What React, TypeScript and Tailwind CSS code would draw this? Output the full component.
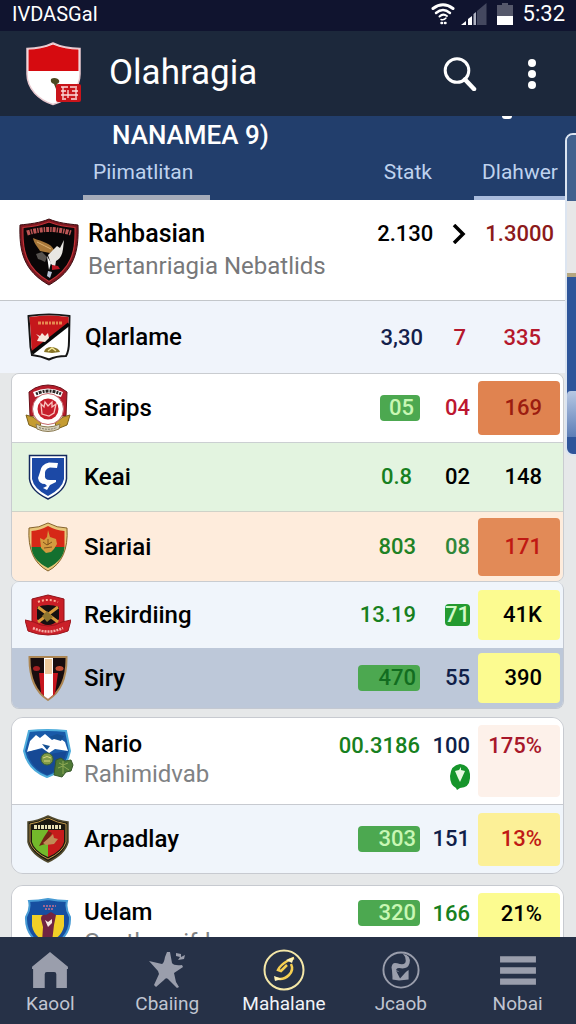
import type { ReactNode } from "react";

type IconProps = { className?: string };

function AppShield() {
  return (
    <svg viewBox="0 0 58 64" className="h-16 w-[58px]" aria-hidden="true">
      <path d="M28 1C20 5 10 6.500 2 6.500V32C2 47 14 58 28 62.500C43 58 55 47 55 32V6.500C46 6.500 36 5 28 1Z" fill="#fff" stroke="#e8c9cf" strokeWidth="1.500" />
      <path d="M28 2.500C20 6 11 7.500 3.500 7.500V29H53.500V7.500C45 7.500 36 6 28 2.500Z" fill="#d60b10" />
      <path d="M26 37q3-2 7 0q3 3-1 5l-1 5l-2-5q-4-1-3-5z" fill="#4c4a22" />
      <rect x="31" y="42" width="25" height="18" rx="2" fill="#c9151b" />
      <path d="M36 45h7M45 45h7M36 49h5M43 48v8M47 49h6M36 53h17M37 57h4M46 57h6M38 45v11M51 46v10" stroke="#fbdcdc" strokeWidth="1.300" />
    </svg>
  );
}

function WifiIcon() {
  return (
    <svg viewBox="0 0 24 22" className="h-[22px] w-6" fill="none" stroke="#fff" strokeLinecap="round" aria-hidden="true">
      <path d="M2 5.500Q12-2 22 5.500" strokeWidth="3" />
      <path d="M5 10Q12 4 19 10" strokeWidth="2.500" />
      <path d="M8.500 13.500Q12 10 16 13" strokeWidth="2" />
      <path d="M10 16.500Q13 17.500 15 15" strokeWidth="1.500" />
      <path d="M10.500 20h.5M14 20h.5" strokeWidth="2.500" />
    </svg>
  );
}

function SignalIcon() {
  return (
    <svg viewBox="0 0 26 22" className="h-[22px] w-[26px]" aria-hidden="true">
      <path d="M0 22L5 18V22Z" fill="#fff" />
      <path d="M7 16L11 13V22H7Z" fill="#fff" />
      <path d="M12.500 11L15 9V22H12.500Z" fill="#aeb1c0" />
      <path d="M16 8L25.500 0V22H16Z" fill="#44485f" />
    </svg>
  );
}

function BatteryIcon() {
  return (
    <svg viewBox="0 0 16 22" className="h-[22px] w-4" aria-hidden="true">
      <path d="M5 0H11V2H16V22H0V2H5Z" fill="#55586b" />
      <path d="M0 13H16V22H0Z" fill="#fff" />
    </svg>
  );
}

function SearchIcon() {
  return (
    <svg viewBox="0 0 34 34" className="size-[34px]" fill="none" stroke="#fff" aria-hidden="true">
      <circle cx="14" cy="13.500" r="11.800" strokeWidth="3" />
      <path d="M22 22.500L31 32" strokeWidth="4.500" strokeLinecap="round" />
    </svg>
  );
}

function MoreIcon() {
  return (
    <svg viewBox="0 0 10 32" className="h-8 w-2.5" fill="#fff" aria-hidden="true">
      <circle cx="5" cy="5" r="4" />
      <circle cx="5" cy="16" r="4" />
      <circle cx="5" cy="27" r="4" />
    </svg>
  );
}

function EagleCrest() {
  return (
    <svg viewBox="0 0 62 68" className="h-[68px] w-[62px]" aria-hidden="true">
      <path d="M31 1C22 5 11 6 2 7C1 34 6 53 31 67C56 53 61 34 60 7C51 6 40 5 31 1Z" fill="#7d1820" stroke="#3a0c10" strokeWidth="1" />
      <path d="M31 4C23 7 13 9 5 9.500C4 34 9 51 31 63.500C53 51 58 34 57 9.500C49 9 39 7 31 4Z" fill="#090607" stroke="#c03136" strokeWidth="1.200" />
      <path d="M9 15Q31 8 53 15" fill="none" stroke="#bd5655" strokeWidth="5" strokeDasharray="3 1 1.500 1" />
      <path d="M15 20C25 24 33 25 36 32L32 35L22 33C20 29 16 26 15 20Z" fill="#a9783a" />
      <path d="M19 24Q27 28 33 31" stroke="#e0b374" fill="none" />
      <path d="M35 32L39 28L42 30L46 22L45 31Q44 40 38 43L37 49L33 46L30 37Z" fill="#e9e6e2" />
      <path d="M18 36L24 34L29 39L27 44L23 42L20 41Z" fill="#56524f" />
      <path d="M29 38L33 45L31 52Z" fill="#fff" />
      <path d="M34 47l6 1l2 3l-8 1z" fill="#bb1521" />
      <path d="M30 53l4 1l-2 6l-3-2z" fill="#b9c4d6" />
    </svg>
  );
}

function DiagonalCrest() {
  return (
    <svg viewBox="0 0 44 48" className="h-12 w-11" aria-hidden="true">
      <path d="M1.500 3Q22 0 42.500 3L42 28Q42 38 39 43Q29 43 22 46.500Q14 43 5 42Q3 34 3 26Z" fill="#fff" stroke="#151515" strokeWidth="2" />
      <path d="M2.500 4Q22 1 41.500 4V11L5 39Q4 32 4 24Z" fill="#c5171b" />
      <path d="M42 11L5 40" stroke="#080808" strokeWidth="3.500" />
      <path d="M11 10H35" stroke="#e68a51" strokeWidth="3" strokeDasharray="3 1 2 1" />
      <path d="M9 21l4 2l2-3l3 3l3-3l1 5l-4 4l-8-1l2-4z" fill="#f8e7dc" />
      <path d="M17 39q1-5 8-5q7 1 8 5l-8 1z" fill="#867324" />
      <path d="M21 38l4-3l4 3" stroke="#f5e89a" fill="none" strokeWidth="1.500" />
    </svg>
  );
}

function RoundCrest() {
  return (
    <svg viewBox="0 0 46 48" className="h-12 w-[46px]" aria-hidden="true">
      <path d="M4 8L10 4Q23-2 36 4L42 8L41 32H5Z" fill="#b51c2a" stroke="#6a1019" />
      <path d="M8 8Q23 1 38 8L36 13Q23 8 10 13Z" fill="#fff" />
      <path d="M11 10Q23 4 36 10" fill="none" stroke="#2c2525" strokeWidth="3" strokeDasharray="2 1 3 1" />
      <path d="M1 31L8 33L16 39L14 45L4 41Z M45 31L38 33L30 39L32 45L42 41Z" fill="#c59c31" stroke="#7b611d" />
      <circle cx="23" cy="25" r="15.500" fill="#fff" stroke="#c56a6e" />
      <circle cx="23" cy="25" r="10.500" fill="#c71e2b" />
      <path d="M16 20l3 3l1-5l3 4l4-4v5l4-3l-2 9l-5 3l-7-2z" fill="none" stroke="#f8c4be" strokeWidth="1.300" />
      <path d="M11 40Q23 46 35 40L34 45Q23 50 12 45Z" fill="#d8d2bc" stroke="#8a7a52" />
      <path d="M14 43.500Q23 47 32 43.500" fill="none" stroke="#7c7564" strokeDasharray="2 1" />
    </svg>
  );
}

function BlueCrest() {
  return (
    <svg viewBox="0 0 40 46" className="h-[46px] w-10" aria-hidden="true">
      <path d="M1.500 1.500H38.500V25Q37 37 20 45Q3 37 1.500 25Z" fill="#fff" stroke="#14295f" strokeWidth="1.500" />
      <path d="M4 4H36V25Q34 35 20 42Q6 35 4 25Z" fill="#1c49a6" />
      <path d="M30 9L21 8.500Q13 10 12 18L10 24Q11 30 17 30L19 32L15 34L19 36L22 31L28 28V26L22 26Q16 26 17 21Q16 15 22 13.500L29 14Z" fill="#fff" />
    </svg>
  );
}

function RedGreenCrest() {
  return (
    <svg viewBox="0 0 42 50" className="h-[50px] w-[42px]" aria-hidden="true">
      <path d="M21 1Q12 6 2 6Q0 38 21 49Q42 38 40 6Q30 6 21 1Z" fill="#e7c77b" stroke="#84622a" />
      <path d="M21 4Q13 8.500 4.500 9V25H37.500V9Q29 8.500 21 4Z" fill="#d62817" />
      <path d="M4.500 25H37.500Q37 38 21 46Q5 38 4.500 25Z" fill="#14702f" />
      <path d="M13 16l4 2l3-3l1-7l2 7l6 2l1 5l-3 5l-3 3l-5 1l-5-5z" fill="#d39b3f" />
      <path d="M16 20l4 3l5-3M17 26l8-1M21 17v6" stroke="#80521c" fill="none" />
    </svg>
  );
}

function RibbonCrest() {
  return (
    <svg viewBox="0 0 46 42" className="h-[42px] w-[46px]" aria-hidden="true">
      <path d="M7 5L23 1L39 5V30L23 36L7 30Z" fill="#c91e26" stroke="#8f1118" />
      <path d="M12 13Q23 9 34 13V25Q29 31 23 31Q17 31 12 25Z" fill="#151011" />
      <path d="M13 13L33 28M33 13L13 28" stroke="#d79a3b" strokeWidth="3" />
      <path d="M17 22l5-5l6 6l-6 5z" fill="#8f7530" />
      <path d="M13 8Q23 4 33 8" stroke="#ffb19b" fill="none" strokeWidth="2" strokeDasharray="2 2" />
      <path d="M0 26L9 28Q23 36 37 28L46 26L43 37Q23 45 3 37Z" fill="#cb2029" stroke="#9c151c" />
      <path d="M8 34Q23 41 38 34" stroke="#f5aea7" fill="none" strokeWidth="2.500" strokeDasharray="2 1" />
    </svg>
  );
}

function StripeCrest() {
  return (
    <svg viewBox="0 0 40 46" className="h-[46px] w-10" aria-hidden="true">
      <path d="M1.500 2H38.500Q39 33 20 45Q1 33 1.500 2Z" fill="#180d0e" stroke="#ad8754" strokeWidth="2" />
      <path d="M11 18H30L27 39L20 44L13 38Z" fill="#c6151d" />
      <path d="M16 3H25V40L20 44L16 41Z" fill="#fff" />
      <path d="M17 4H24V19H17Z" fill="#edc99c" />
      <ellipse cx="8.500" cy="13.500" rx="3.500" ry="2.500" fill="#a31f22" />
      <ellipse cx="31.500" cy="13.500" rx="4" ry="2.500" fill="#c14b31" />
    </svg>
  );
}

function SkyCrest() {
  return (
    <svg viewBox="0 0 52 50" className="h-[50px] w-[52px]" aria-hidden="true">
      <path d="M7 2Q25 0 44 2L48 22Q44 42 25 48Q6 41 2 22Z" fill="#195aa8" stroke="#4faddc" strokeWidth="2" />
      <path d="M8 12L14 6L18 9L23 5L30 11L36 8L43 13L46 22L33 20L27 24L20 19L5 23Z" fill="#fff" />
      <path d="M27 8l8-3l7 2l-3 5l-7-2zM20 15l8 2l-3 4z" fill="#155094" />
      <path d="M5 23L20 20L28 25L45 22Q41 40 25 46Q9 39 5 23Z" fill="#164995" />
      <circle cx="25" cy="30" r="6" fill="#829c49" stroke="#3d6333" />
      <path d="M21 29q4-3 8 0M22 32h6" stroke="#d6d67f" fill="none" />
      <path d="M34 31l5-2l4 3l6-1l2 5l-2 6l-5 1l-4 5l-8-2l1-8z" fill="#4f7936" stroke="#37582b" />
      <path d="M37 34l4 2l5-2M36 39l5-2l6 4M41 32v13" stroke="#90aa55" fill="none" />
    </svg>
  );
}

function ClawCrest() {
  return (
    <svg viewBox="0 0 44 48" className="h-12 w-11" aria-hidden="true">
      <path d="M22 1Q12 6 2 7V27Q5 39 22 47Q39 39 42 27V7Q32 6 22 1Z" fill="#1b180f" stroke="#514a2e" strokeWidth="1.500" />
      <path d="M22 3Q12 8 4 9V27Q7 37 22 44Q37 37 40 27V9Q32 8 22 3Z" fill="none" stroke="#c29a4a" />
      <path d="M6 15H22V42Q8 36 6 27Z" fill="#73b92b" />
      <path d="M22 15H38V27Q36 36 22 42Z" fill="#c61b1b" />
      <path d="M8 12H36" stroke="#e7dfb2" strokeWidth="4" strokeDasharray="3 1 2 1" />
      <path d="M13 31L18 22L22 16L26 18L23 23L19 29Z" fill="#722415" />
      <path d="M17 28L24 22L27 19L28 23L32 24L28 29L20 30Z" fill="#c08c56" />
    </svg>
  );
}

function FistCrest() {
  return (
    <svg viewBox="0 0 48 52" className="h-[52px] w-12" aria-hidden="true">
      <path d="M5 4Q14 4 24 2Q34 4 43 4Q41 12 46 20Q47 41 24 51Q1 41 2 20Q7 12 5 4Z" fill="#174fa0" stroke="#489bd4" strokeWidth="2" />
      <path d="M8 18H40V29Q38 40 24 46Q10 40 8 29Z" fill="#f1cf27" />
      <path d="M17 22Q17 17 22 18L27 15L32 18L30 28L28 45H18L19 30Z" fill="#702443" />
      <path d="M21 23l3 2l4-3v4l-4 4z" fill="#f6e8e1" />
      <path d="M19 9h13M21 12h9" stroke="#9d6691" strokeWidth="2" strokeDasharray="2 1" />
    </svg>
  );
}

function LeafBadge() {
  return (
    <svg viewBox="0 0 20 27" className="h-[27px] w-5" role="img" aria-label="Naik">
      <path d="M10 0Q19 1 20 10Q21 24 10 24L7 26L6 24Q0 21 0 12Q1 1 10 0Z" fill="#16952b" />
      <path d="M5 7L9 6L11 3V6L15 7L10 18L8 14Z" fill="#e9f9e2" />
    </svg>
  );
}

function HomeIcon({ className }: IconProps) {
  return (
    <svg viewBox="0 0 36 36" className={className} fill="currentColor" aria-hidden="true">
      <path d="M18 1L35 15V17H34V35H24V22Q24 20 22 20H15Q13 20 13 22V35H2V17H1V15Z" />
    </svg>
  );
}

function StarIcon({ className }: IconProps) {
  return (
    <svg viewBox="0 0 38 38" className={className} fill="currentColor" aria-hidden="true">
      <path d="M1 10L14 13Q16 12 17 6L19 1H22L24 12Q26 15 34 14L35 16L26 22L28 31L31 36L29 37L20 28Q18 26 16 29L8 36L6 34L11 23L10 20Z" />
      <path d="M28 2L33 3V6L37 4L36 8L30 9L32 6L28 5Z" />
    </svg>
  );
}

function SwirlIcon({ className }: IconProps) {
  return (
    <svg viewBox="0 0 42 42" className={className} fill="none" aria-hidden="true">
      <circle cx="21" cy="21" r="19.500" stroke="#f4e7a8" strokeWidth="2" />
      <path d="M31 9L26 11Q17 16 15 21L18 22L24 16" stroke="#f6cf52" strokeWidth="2.500" />
      <path d="M28 15Q31 21 26 26Q20 32 12 29" stroke="#f6cf52" strokeWidth="2.500" />
      <path d="M31 8L23 11L29 14ZM11 27L12 32L19 30Z" fill="#fff3b8" />
    </svg>
  );
}

function BirdIcon({ className }: IconProps) {
  return (
    <svg viewBox="0 0 40 40" className={className} aria-hidden="true">
      <circle cx="20" cy="20" r="18.500" fill="none" stroke="currentColor" strokeWidth="2" />
      <path d="M22 3Q31 5 29 13Q27 20 18 18Q14 18 15 22L12 30L10 17Q11 11 16 13Q25 16 25 10Q25 6 22 3Z" fill="currentColor" />
      <path d="M11 19L17 21L20 25L28 20V30L18 31L11 30Z" fill="currentColor" />
      <path d="M15 21L20 23L27 20L19 29Z" fill="#263147" />
    </svg>
  );
}

function MenuIcon({ className }: IconProps) {
  return (
    <svg viewBox="0 0 36 36" className={className} fill="currentColor" aria-hidden="true">
      <path d="M1 5H35V11H1ZM1 15.500H35V21.500H1ZM1 26H35V32H1Z" />
    </svg>
  );
}

type Row = {
  name: string;
  sub?: string;
  crest: ReactNode;
  row: string;
  first: ReactNode;
  second: ReactNode;
  last: ReactNode;
  lastBox: string;
};

function Pill({ children, className }: { children: ReactNode; className: string }) {
  return <span className={`flex h-[26px] items-center justify-end rounded bg-[#4ca850] ${className}`}>{children}</span>;
}

const cardGroups: { className: string; rows: Row[] }[] = [
  {
    className: "rounded-lg border border-[#c9ccd0]",
    rows: [
      {
        name: "Sarips", crest: <RoundCrest />, row: "h-[69px] bg-white border-b border-[#cbcfd2] items-center",
        first: <Pill className="w-10 px-1.5 text-[#c8f7b4]">05</Pill>,
        second: <span className="text-[#bd1730]">04</span>, last: "169",
        lastBox: "h-[54px] bg-[#e08350] text-[#9c1d10]",
      },
      {
        name: "Keai", crest: <BlueCrest />, row: "h-[69px] bg-[#e3f4e0] border-b border-[#cfd2c8] items-center",
        first: <span className="pr-2 text-[#178020]">0.8</span>, second: "02", last: "148", lastBox: "h-[54px]",
      },
      {
        name: "Siariai", crest: <RedGreenCrest />, row: "h-[69px] bg-[#feecdc] items-center",
        first: <span className="pr-1 text-[#218224]">803</span>, second: <span className="text-[#318739]">08</span>, last: "171",
        lastBox: "h-[58px] bg-[#e28a57] text-[#c01913]",
      },
    ],
  },
  {
    className: "rounded-lg border-x border-b border-[#c3c8d1]",
    rows: [
      {
        name: "Rekirdiing", crest: <RibbonCrest />, row: "h-[66px] bg-[#f0f5fb] items-center",
        first: <span className="pr-1 text-[#178020]">13.19</span>,
        second: <span className="flex h-[22px] items-center rounded-sm bg-[#249a30] text-[#d2f9c9]">71</span>,
        last: "41K", lastBox: "h-[50px] bg-[#fcfb90]",
      },
      {
        name: "Siry", crest: <StripeCrest />, row: "h-[60px] bg-[#bdc8d9] items-center",
        first: <Pill className="w-[62px] px-1 text-[#126d20]">470</Pill>,
        second: <span className="text-[#101f49]">55</span>, last: "390", lastBox: "h-[50px] bg-[#fcfb90]",
      },
    ],
  },
  {
    className: "mt-2 rounded-xl border border-[#c7cad0]",
    rows: [
      {
        name: "Nario", sub: "Rahimidvab", crest: <SkyCrest />, row: "h-[87px] bg-white border-b border-[#c7cad0] items-start pt-[7px]",
        first: <span className="text-[#178020]">00.3186</span>,
        second: <span className="flex flex-col items-end gap-1 text-[#101f49]">100<LeafBadge /></span>,
        last: "175%", lastBox: "h-[72px] items-start bg-[#fdf1ea] pt-[7px] text-[#a8172a]",
      },
      {
        name: "Arpadlay", crest: <ClawCrest />, row: "h-[68px] bg-[#f0f5fb] items-center",
        first: <Pill className="w-[62px] px-1 text-[#c8f7b4]">303</Pill>,
        second: <span className="text-[#101f49]">151</span>, last: "13%",
        lastBox: "h-[53px] bg-[#fcf097] text-[#c01a15]",
      },
    ],
  },
  {
    className: "mt-[11px] rounded-xl border border-[#c7cad0]",
    rows: [
      {
        name: "Uelam", sub: "Gentleswifdy", crest: <FistCrest />, row: "h-[87px] bg-white items-start pt-[7px]",
        first: <Pill className="w-[62px] px-1 text-[#c8f7b4]">320</Pill>,
        second: <span className="text-[#178020]">166</span>, last: "21%",
        lastBox: "h-[72px] items-start bg-[#fcfb90] pt-[7px]",
      },
    ],
  },
];

function TeamRow({ name, sub, crest, row, first, second, last, lastBox }: Row) {
  const top = sub ? "pt-[7px] leading-7" : "leading-7";
  return (
    <tr className={`flex pr-[3px] ${row}`}>
      <td className={`flex w-[72px] shrink-0 justify-center ${sub ? "pt-1" : ""}`}>{crest}</td>
      <th scope="row" className={`w-0 flex-1 text-left text-2xl font-medium whitespace-nowrap ${sub ? "pt-1 leading-[30px]" : ""}`}>
        {name}
        {sub && <span className="block text-2xl leading-[30px] font-normal text-[#808284]">{sub}</span>}
      </th>
      <td className={`flex justify-end ${top}`}>{first}</td>
      <td className={`flex w-[50px] shrink-0 justify-end ${top}`}>{second}</td>
      <td className="ml-2 w-[82px] shrink-0">
        <span className={`flex justify-end rounded pr-[18px] leading-7 ${lastBox} ${sub ? "" : "items-center"}`}>{last}</span>
      </td>
    </tr>
  );
}

const navItems = [
  { label: "Kaool", Icon: HomeIcon, active: false },
  { label: "Cbaiing", Icon: StarIcon, active: false },
  { label: "Mahalane", Icon: SwirlIcon, active: true },
  { label: "Jcaob", Icon: BirdIcon, active: false },
  { label: "Nobai", Icon: MenuIcon, active: false },
];

export default function App() {
  return (
    <div className="relative flex h-screen flex-col overflow-hidden bg-[#e6e8e9] font-['Roboto',sans-serif] text-black">
      <div className="flex h-[31px] shrink-0 items-center bg-[#10142f] pr-[11px] pb-1 pl-3 text-white">
        <span className="text-xl">IVDASGaI</span>
        <div className="ml-auto flex items-center">
          <WifiIcon />
          <span className="ml-1.5"><SignalIcon /></span>
          <span className="ml-2.5"><BatteryIcon /></span>
          <span className="ml-2.5 text-[22px]">5:32</span>
        </div>
      </div>

      <header className="flex h-[85px] shrink-0 items-center bg-[#1c283b] pr-[39px] pl-[25px] text-white">
        <AppShield />
        <h1 className="ml-[26px] text-[35px]">Olahragia</h1>
        <button aria-label="Cari" className="ml-auto"><SearchIcon /></button>
        <button aria-label="Menu lainnya" className="ml-[50px]"><MoreIcon /></button>
      </header>

      <section className="relative h-[84px] shrink-0 bg-[#223e6c]">
        <span className="absolute top-0 right-16 h-[3px] w-2.5 rounded-b-full bg-white" />
        <h2 className="pt-1 pl-28 text-[26px] leading-[30px] font-medium text-white">NANAMEA 9)</h2>
        <nav className="flex items-stretch justify-between pl-[83px] text-[21px] leading-9 text-[#bfd2ee]">
          <a href="#piimatlitan" className="h-[50px] w-[127px] border-b-[5px] border-[#a5abb9] pt-1 pl-2.5">Piimatlitan</a>
          <div className="flex">
            <a href="#statk" className="pt-1 pr-[42px]">Statk</a>
            <a href="#dlahwer" className="h-[50px] w-[102px] border-b-4 border-[#a9bbdc] pt-1 pl-2">Dlahwer</a>
          </div>
        </nav>
      </section>

      <main className="min-h-0 flex-1 overflow-hidden">
        <table className="block text-[22px] font-medium">
          <tbody className="mr-[11px] block">
            <tr className="flex h-[101px] border-b border-[#c3c6ca] bg-white pt-[18px]">
              <td className="flex w-[88px] shrink-0 justify-center pl-2.5"><EagleCrest /></td>
              <th scope="row" className="w-0 flex-1 text-left text-[25px] leading-8 font-medium whitespace-nowrap">
                Rahbasian
                <span className="block text-2xl leading-8 font-normal text-[#77787a]">Bertanriagia Nebatlids</span>
              </th>
              <td className="leading-8">2.130</td>
              <td className="flex h-8 w-[52px] items-center justify-center">
                <svg viewBox="0 0 14 20" className="h-5 w-3.5" fill="none" stroke="#000" strokeWidth="3.500" role="img" aria-label="Buka">
                  <path d="M2 1L11 10L2 19" />
                </svg>
              </td>
              <td className="pr-[11px] leading-8 text-[#8c1a1b]">1.3000</td>
            </tr>
            <tr className="flex h-[72px] items-center bg-[#f0f4fb] pr-6">
              <td className="flex w-[85px] shrink-0 justify-center pl-3"><DiagonalCrest /></td>
              <th scope="row" className="w-0 flex-1 text-left text-2xl font-medium">Qlarlame</th>
              <td className="text-[#14204b]">3,30</td>
              <td className="w-[43px] text-right text-[#b5182c]">7</td>
              <td className="w-[75px] text-right text-[#b5182c]">335</td>
            </tr>
          </tbody>
          {cardGroups.map((group) => (
            <tbody key={group.rows[0].name} className={`mr-3 ml-[11px] block overflow-hidden ${group.className}`}>
              {group.rows.map((team) => <TeamRow key={team.name} {...team} />)}
            </tbody>
          ))}
        </table>
      </main>

      <nav className="h-[87px] shrink-0 bg-[#263147]">
        <div className="-ml-2 grid h-full grid-cols-5">
          {navItems.map(({ label, Icon, active }) => (
            <a key={label} href={`#${label}`} className={`flex flex-col items-center pt-3 text-[19px] leading-[26px] ${active ? "text-[#f1f3f8]" : "text-[#c0c5d1]"}`}>
              <span className="flex h-[42px] items-center text-[#9a9eac]">
                <Icon className={active ? "size-[42px]" : "size-[38px]"} />
              </span>
              {label}
            </a>
          ))}
        </div>
      </nav>

      <aside aria-hidden="true" className="absolute top-[133px] -right-2 flex h-[323px] w-[19px] flex-col overflow-hidden rounded-lg border-2 border-[#dce5f1] bg-[#2e559a]">
        <span className="h-[66px] shrink-0 bg-[#42618e]" />
        <span className="h-[76px] shrink-0 border-b-4 border-[#b5a780] bg-[#e7e7e8]" />
        <span className="mt-[114px] h-[46px] shrink-0 rounded-tl bg-linear-to-b from-[#b8c8e3] to-[#5d7eb6]" />
      </aside>
    </div>
  );
}
